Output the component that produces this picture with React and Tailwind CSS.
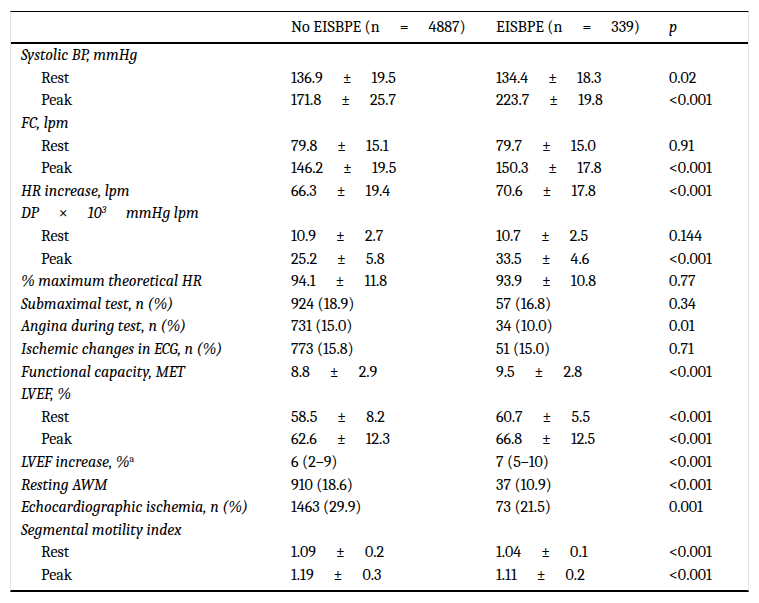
import React from "react";

const PM = ({ a, b }) => (
  <span>
    {a}
    <span className="mx-[20px]">±</span>
    {b}
  </span>
);

const rows = [
  { label: "Systolic BP, mmHg", group: true },
  { label: "Rest", sub: true, a: ["136.9", "19.5"], b: ["134.4", "18.3"], p: "0.02" },
  { label: "Peak", sub: true, a: ["171.8", "25.7"], b: ["223.7", "19.8"], p: "<0.001" },
  { label: "FC, lpm", group: true },
  { label: "Rest", sub: true, a: ["79.8", "15.1"], b: ["79.7", "15.0"], p: "0.91" },
  { label: "Peak", sub: true, a: ["146.2", "19.5"], b: ["150.3", "17.8"], p: "<0.001" },
  { label: "HR increase, lpm", a: ["66.3", "19.4"], b: ["70.6", "17.8"], p: "<0.001" },
  {
    label: (
      <>
        DP<span className="mx-[20px] not-italic">×</span>10<sup className="text-[10px]">3</sup>
        <span className="ml-[20px]">mmHg lpm</span>
      </>
    ),
    group: true,
  },
  { label: "Rest", sub: true, a: ["10.9", "2.7"], b: ["10.7", "2.5"], p: "0.144" },
  { label: "Peak", sub: true, a: ["25.2", "5.8"], b: ["33.5", "4.6"], p: "<0.001" },
  { label: "% maximum theoretical HR", a: ["94.1", "11.8"], b: ["93.9", "10.8"], p: "0.77" },
  { label: "Submaximal test, n (%)", a: "924 (18.9)", b: "57 (16.8)", p: "0.34" },
  { label: "Angina during test, n (%)", a: "731 (15.0)", b: "34 (10.0)", p: "0.01" },
  { label: "Ischemic changes in ECG, n (%)", a: "773 (15.8)", b: "51 (15.0)", p: "0.71" },
  { label: "Functional capacity, MET", a: ["8.8", "2.9"], b: ["9.5", "2.8"], p: "<0.001" },
  { label: "LVEF, %", group: true },
  { label: "Rest", sub: true, a: ["58.5", "8.2"], b: ["60.7", "5.5"], p: "<0.001" },
  { label: "Peak", sub: true, a: ["62.6", "12.3"], b: ["66.8", "12.5"], p: "<0.001" },
  {
    label: (
      <>
        LVEF increase, %<sup className="not-italic text-[10px]">a</sup>
      </>
    ),
    a: "6 (2–9)",
    b: "7 (5–10)",
    p: "<0.001",
  },
  { label: "Resting AWM", a: "910 (18.6)", b: "37 (10.9)", p: "<0.001" },
  { label: "Echocardiographic ischemia, n (%)", a: "1463 (29.9)", b: "73 (21.5)", p: "0.001" },
  { label: "Segmental motility index", group: true },
  { label: "Rest", sub: true, a: ["1.09", "0.2"], b: ["1.04", "0.1"], p: "<0.001" },
  { label: "Peak", sub: true, a: ["1.19", "0.3"], b: ["1.11", "0.2"], p: "<0.001" },
];

function Cell({ v }) {
  if (!v) return <div />;
  if (Array.isArray(v)) return <div><PM a={v[0]} b={v[1]} /></div>;
  return <div>{v}</div>;
}

export default function App() {
  return (
    <div className="font-serif">
      <div className="min-h-[603px] bg-white pl-[10px] pt-[11px] text-[16px] leading-none text-black">
        <div className="w-[739px] border-x border-x-[#e2e2e2] border-t border-t-black border-b-2 border-b-black pb-[4px]">
          <div className="grid h-[32px] grid-cols-[270px_205px_173px_1fr] items-center border-b-2 border-black pl-[10px] pb-[1px]">
            <div />
            <div>
              No EISBPE (n<span className="mx-[20px]">=</span>4887)
            </div>
            <div>
              EISBPE (n<span className="mx-[20px]">=</span>339)
            </div>
            <div className="italic">p</div>
          </div>

          {rows.map((r, i) => (
            <div
              key={i}
              className="grid h-[22.6px] grid-cols-[270px_205px_173px_1fr] items-center pl-[10px]"
            >
              <div className={r.sub ? "pl-[20px]" : "italic"}>{r.label}</div>
              <Cell v={r.a} />
              <Cell v={r.b} />
              <div>{r.p}</div>
            </div>
          ))}
        </div>
      </div>
    </div>
  );
}
